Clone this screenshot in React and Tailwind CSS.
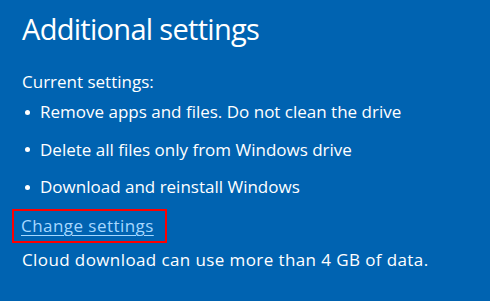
import React from "react";

const items = [
  "Remove apps and files. Do not clean the drive",
  "Delete all files only from Windows drive",
  "Download and reinstall Windows",
];

const App = () => {
  return (
    <div
      className="w-[490px] h-[301px] bg-[#0063b1] text-white overflow-hidden pl-[22px] pt-[9px]"
      style={{ fontFamily: '"Open Sans", "Noto Sans", sans-serif' }}
    >
      <h1 className="text-[29px] leading-[40px] font-normal tracking-[-0.7px]">Additional settings</h1>

      <div className="mt-[22px] text-[17px] leading-[22px]">
        <p>Current settings:</p>
        <ul className="mt-[8px] flex flex-col gap-[15.5px]">
          {items.map((item, i) => (
            <li key={i} className="flex items-center">
              <span className="ml-[3px] mr-[10px] w-[5px] h-[5px] rounded-full bg-white" />
              <span>{item}</span>
            </li>
          ))}
        </ul>

        <div className="mt-[10.5px] -ml-[10px] w-[155px] h-[34px] border-2 border-[#ff0000] flex items-center pl-[7px] pt-[1px]">
          <span className="text-[#a6d8ff] underline underline-offset-[3px] decoration-1 tracking-[0.45px]">
            Change settings
          </span>
        </div>

        <p className="mt-[6px] tracking-[0.4px]">Cloud download can use more than 4 GB of data.</p>
      </div>
    </div>
  );
};

export default App;
